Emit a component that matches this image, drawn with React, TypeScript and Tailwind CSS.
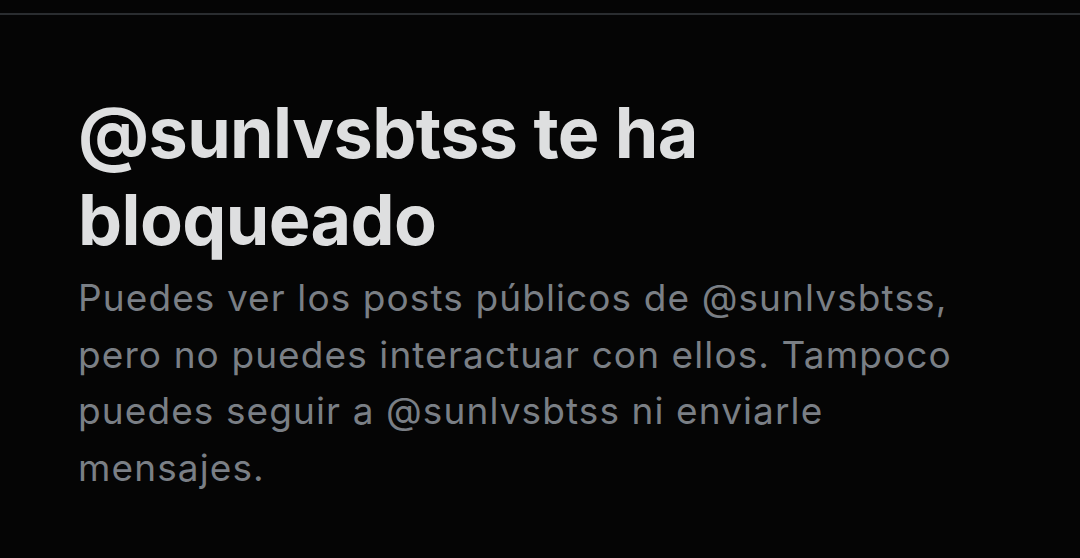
export default function App() {
  return (
    <div className="w-[1080px] h-[558px] bg-[#050505] overflow-hidden" style={{ fontFamily: "Inter, 'Noto Sans', sans-serif" }}>
      <div className="h-[15px] border-b-2 border-[#2a2d30]" />
      <div className="pl-[78px] pr-[40px] pt-[74px]">
        <h1 className="text-[70px] leading-[87px] font-bold text-[#dedfe0] tracking-[-0.6px] w-[800px]">@sunlvsbtss te ha bloqueado</h1>
        <p className="mt-[7px] text-[37px] leading-[56.5px] text-[#7a7f85] tracking-[1.1px] w-[915px]">
          Puedes ver los posts públicos de @sunlvsbtss, pero no puedes interactuar con ellos. Tampoco puedes seguir a @sunlvsbtss ni enviarle mensajes.
        </p>
      </div>
    </div>
  );
}
